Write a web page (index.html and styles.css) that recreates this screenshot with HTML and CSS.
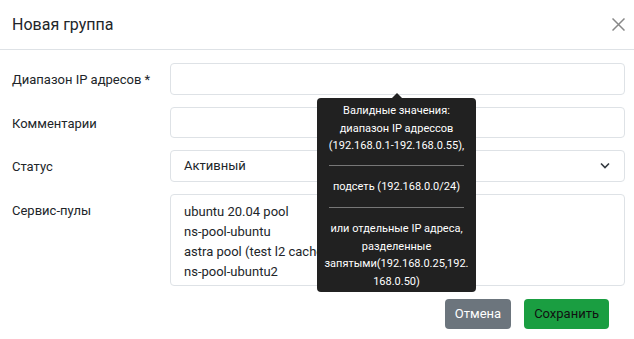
FILE: index.html
```html
<!DOCTYPE html>
<html lang="ru">
<head>
    <meta charset="UTF-8">
    <title>Новая группа</title>
    <link rel="stylesheet" href="styles.css">
</head>
<body>
    <div class="modal">
        <div class="modal-header">
            <h5 class="modal-title">Новая группа</h5>
            <button class="close-btn" aria-label="Закрыть">
                <svg width="13" height="13" viewBox="0 0 13 13"><path d="M0.5 0.5L12.5 12.5M12.5 0.5L0.5 12.5" stroke="#888" stroke-width="1.5"/></svg>
            </button>
        </div>

        <div class="modal-body">
            <div class="form-row">
                <label>Диапазон IP адресов *</label>
                <input type="text" class="form-control">
            </div>
            <div class="form-row">
                <label>Комментарии</label>
                <input type="text" class="form-control">
            </div>
            <div class="form-row">
                <label>Статус</label>
                <div class="form-select">
                    <span>Активный</span>
                    <svg width="10" height="7" viewBox="0 0 10 7"><path d="M1 1.5L5 5.5L9 1.5" fill="none" stroke="#343a40" stroke-width="1.6"/></svg>
                </div>
            </div>
            <div class="form-row top">
                <label>Сервис-пулы</label>
                <div class="multi-select">
                    <div>ubuntu 20.04 pool</div>
                    <div>ns-pool-ubuntu</div>
                    <div>astra pool (test l2 cache)</div>
                    <div>ns-pool-ubuntu2</div>
                </div>
            </div>
        </div>

        <div class="modal-footer">
            <button class="btn btn-secondary">Отмена</button>
            <button class="btn btn-success">Сохранить</button>
        </div>

        <div class="tooltip">
            <div>Валидные значения: диапазон IP адрессов (192.168.0.1-192.168.0.55),</div>
            <hr>
            <div>подсеть (192.168.0.0/24)</div>
            <hr>
            <div>или отдельные IP адреса, разделенные запятыми(192.168.0.25,192.<br>168.0.50)</div>
        </div>
    </div>
</body>
</html>
```

FILE: styles.css
```css
body {
    margin: 0;
    font-family: Roboto, sans-serif;
    background: #fff;
    color: #212529;
}

.modal {
    position: relative;
    width: 634px;
    height: 339px;
    background: #fff;
}

.modal-header {
    display: flex;
    justify-content: space-between;
    align-items: center;
    height: 49px;
    padding: 0 9px 0 12px;
    border-bottom: 1px solid #dee2e6;
}

.modal-title {
    margin: 0;
    font-size: 16px;
    font-weight: 400;
}

.close-btn {
    border: none;
    background: none;
    padding: 0;
    width: 13px;
    height: 13px;
}

.modal-body {
    display: flex;
    flex-direction: column;
    gap: 12px;
    padding: 13px 9px 0 12px;
}

.form-row {
    display: flex;
    align-items: center;
}

.form-row.top {
    align-items: flex-start;
}

.form-row label {
    width: 158px;
    padding-top: 2px;
    font-size: 13px;
}

.form-row.top label {
    padding-top: 9px;
}

.form-control,
.form-select,
.multi-select {
    flex: 1;
    box-sizing: border-box;
    border: 1px solid #dee2e6;
    border-radius: 4px;
    background: #fff;
    font-family: inherit;
    font-size: 13px;
}

.form-control {
    height: 31.5px;
}

.form-select {
    display: flex;
    justify-content: space-between;
    align-items: center;
    height: 31.5px;
    padding: 0 14px 0 13px;
}

.multi-select {
    height: 92px;
    padding: 7px 13px 5px;
    line-height: 20px;
}

.modal-footer {
    display: flex;
    justify-content: flex-end;
    gap: 13px;
    padding: 13px 25px 0 0;
}

.btn {
    height: 30px;
    border: none;
    border-radius: 4px;
    font-family: inherit;
    font-size: 13px;
    padding: 0 10px;
}

.btn-secondary {
    background: #6c757d;
    color: #fff;
}

.btn-success {
    background: #1a9e41;
    color: #111;
}

.tooltip {
    position: absolute;
    left: 317px;
    top: 98px;
    width: 159px;
    box-sizing: border-box;
    padding: 4px 5px 2px;
    background: #212121;
    color: #fff;
    border-radius: 4px;
    text-align: center;
    font-size: 11px;
    line-height: 17.5px;
}

.tooltip::before {
    content: "";
    position: absolute;
    top: -5px;
    left: 75px;
    border-left: 5px solid transparent;
    border-right: 5px solid transparent;
    border-bottom: 5px solid #212121;
}

.tooltip hr {
    border: none;
    border-top: 1px solid #777;
    margin: 10px 7px 12px;
}

.tooltip hr + div + hr {
    margin: 12px 7px 12px;
}
```
